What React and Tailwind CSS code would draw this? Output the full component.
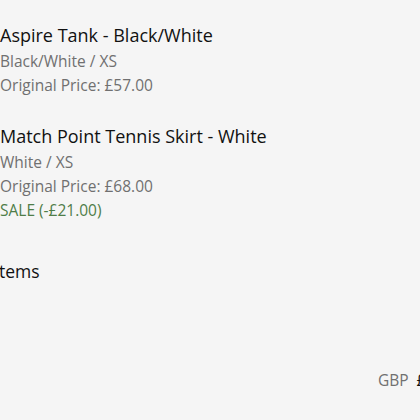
import React from "react";

const items = [
  { name: "Aspire Tank - Black/White", variant: "Black/White / XS", price: "£57.00" },
  { name: "Match Point Tennis Skirt - White", variant: "White / XS", price: "£68.00", sale: "SALE (-£21.00)" },
];

export default function App() {
  return (
    <div
      className="h-[420px] w-[420px] overflow-hidden bg-[#f5f5f5]"
      style={{ fontFamily: '"Open Sans", "Liberation Sans", sans-serif' }}
    >
      <div className="flex flex-col gap-[27px] pt-[23px]">
        {items.map((it) => (
          <div key={it.name} className="flex flex-col">
            <div className="text-[18px] leading-[24px] text-[#111111]">{it.name}</div>
            <div className="mt-[2px] text-[15.5px] leading-[24px] text-[#707070]">{it.variant}</div>
            <div className="text-[15.5px] leading-[24px] text-[#707070]">Original Price: {it.price}</div>
            {it.sale ? (
              <div className="text-[15.5px] leading-[24px] text-[#4f7d48]">{it.sale}</div>
            ) : null}
          </div>
        ))}
      </div>
      <div className="ml-[-6px] mt-[37px] text-[17.5px] leading-[24px] text-[#111111]">Items</div>
      <div className="ml-[378px] mt-[85px] flex whitespace-nowrap text-[15.5px] leading-[24px] text-[#707070]">
        <span>GBP</span>
        <span className="ml-[8px] text-[#111111]">£104.00</span>
      </div>
    </div>
  );
}
